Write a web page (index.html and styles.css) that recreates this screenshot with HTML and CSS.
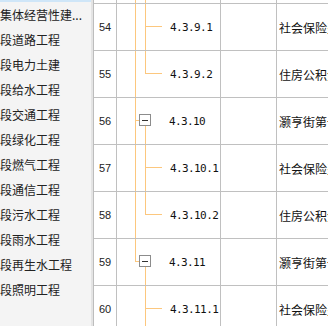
FILE: index.html
```html
<!DOCTYPE html>
<html lang="zh-CN">

<head>
    <meta charset="UTF-8">
    <meta name="viewport" content="width=device-width, initial-scale=1.0">
    <title>清单</title>
    <link rel="stylesheet" href="styles.css">
</head>

<body>
    <div class="wrap">
        <div class="side">
            <div class="sel"></div>
            <div class="item">集体经营性建...</div>
            <div class="item">段道路工程</div>
            <div class="item">段电力土建</div>
            <div class="item">段给水工程</div>
            <div class="item">段交通工程</div>
            <div class="item">段绿化工程</div>
            <div class="item">段燃气工程</div>
            <div class="item">段通信工程</div>
            <div class="item">段污水工程</div>
            <div class="item">段雨水工程</div>
            <div class="item">段再生水工程</div>
            <div class="item">段照明工程</div>
        </div>

        <div class="grid">
            <!-- 上一行只露出一点 -->
            <div class="row part">
                <div class="c num"></div>
                <div class="c tree"><i class="v1"></i><i class="v2"></i></div>
                <div class="c"></div>
                <div class="c txt"></div>
            </div>
            <div class="row">
                <div class="c num">54</div>
                <div class="c tree leaf"><i class="v1"></i><i class="v2"></i><i class="h2"></i>4.3.9.1</div>
                <div class="c"></div>
                <div class="c txt">社会保险费</div>
            </div>
            <div class="row">
                <div class="c num">55</div>
                <div class="c tree leaf"><i class="v1"></i><i class="v2 end"></i><i class="h2"></i>4.3.9.2</div>
                <div class="c"></div>
                <div class="c txt">住房公积金</div>
            </div>
            <div class="row">
                <div class="c num">56</div>
                <div class="c tree node"><i class="v1"></i><i class="h1"></i><i class="box"></i><i class="v2 start"></i>4.3.10</div>
                <div class="c"></div>
                <div class="c txt">灏亨街第一</div>
            </div>
            <div class="row">
                <div class="c num">57</div>
                <div class="c tree leaf"><i class="v1"></i><i class="v2"></i><i class="h2"></i>4.3.10.1</div>
                <div class="c"></div>
                <div class="c txt">社会保险费</div>
            </div>
            <div class="row">
                <div class="c num">58</div>
                <div class="c tree leaf"><i class="v1"></i><i class="v2 end"></i><i class="h2"></i>4.3.10.2</div>
                <div class="c"></div>
                <div class="c txt">住房公积金</div>
            </div>
            <div class="row">
                <div class="c num">59</div>
                <div class="c tree node"><i class="v1 end"></i><i class="h1"></i><i class="box"></i><i class="v2 start"></i>4.3.11</div>
                <div class="c"></div>
                <div class="c txt">灏亨街第一</div>
            </div>
            <div class="row">
                <div class="c num">60</div>
                <div class="c tree leaf"><i class="v2"></i><i class="h2"></i>4.3.11.1</div>
                <div class="c"></div>
                <div class="c txt">社会保险费</div>
            </div>
        </div>
    </div>
</body>

</html>
```

FILE: styles.css
```css
* {
    margin: 0;
    padding: 0;
    box-sizing: border-box;
}

body {
    width: 328px;
    height: 326px;
    overflow: hidden;
    background: #fff;
    font-family: "Noto Sans CJK SC", sans-serif;
    font-size: 12px;
    color: #222;
}

.wrap {
    display: flex;
    height: 326px;
}

/* 左边的树 */
.side {
    width: 93px;
    flex: none;
    background: #f4f4f4;
    border-right: 2px solid #e4e4e4;
    overflow: hidden;
}

.sel {
    height: 2px;
    background: #cfe6f8;
}

.item {
    height: 25px;
    line-height: 25px;
    white-space: nowrap;
    color: #222;
}

/* 右边的表格 */
.grid {
    flex: 1;
    border-left: 1px solid #bdbdbd;
    overflow: hidden;
}

.row {
    display: grid;
    grid-template-columns: 23px 104px 56px 1fr;
    height: 47px;
    border-bottom: 1px solid #c0c0c0;
}

.row.part {
    height: 4px;
}

.c {
    border-right: 1px solid #c0c0c0;
    display: flex;
    align-items: center;
    white-space: nowrap;
    overflow: hidden;
}

.num {
    padding-left: 5px;
    font-family: "Liberation Sans", sans-serif;
    font-size: 11px;
}

.txt {
    border-right: none;
    padding-left: 2px;
    color: #111;
}

.tree {
    position: relative;
    font-family: "DejaVu Sans Mono", monospace;
    font-size: 11px;
    letter-spacing: -0.6px;
    color: #111;
}

.tree.leaf {
    padding-left: 53px;
}

.tree.node {
    padding-left: 52px;
}

/* 连接线 */
.tree i {
    position: absolute;
    display: block;
    background: #fcc77e;
}

.v1 {
    left: 18px;
    top: 0;
    bottom: 0;
    width: 1px;
}

.v2 {
    left: 28px;
    top: 0;
    bottom: 0;
    width: 1px;
}

.v1.end,
.v2.end {
    bottom: auto;
    height: 23px;
}

.v2.start {
    top: 28px;
}

.h1 {
    left: 18px;
    top: 22px;
    width: 4px;
    height: 1px;
}

.h2 {
    left: 28px;
    top: 22px;
    width: 17px;
    height: 1px;
}

.tree i.box {
    left: 22px;
    top: 16px;
    width: 12px;
    height: 12px;
    background: #fff;
    border: 1px solid #8c8c8c;
}

.box::after {
    content: "";
    position: absolute;
    left: 2px;
    top: 5px;
    width: 6px;
    height: 1px;
    background: #333;
}
```
